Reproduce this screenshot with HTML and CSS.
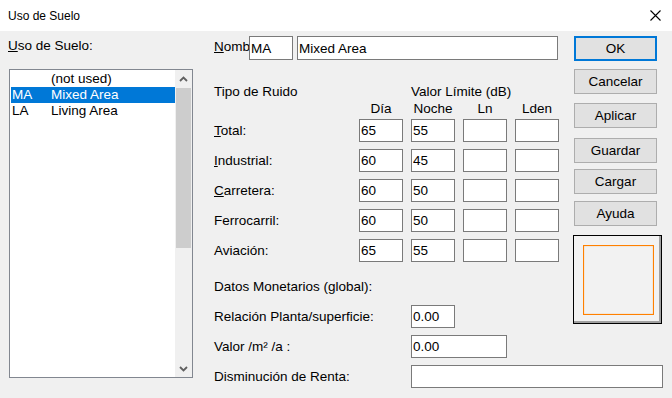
FILE: index.html
```html
<!DOCTYPE html>
<html lang="es">
<head>
    <meta charset="UTF-8">
    <title>Uso de Suelo</title>
    <link rel="stylesheet" href="styles.css">
</head>
<body>
    <div id="dialog">
        <div class="titlebar">
            <span class="title">Uso de Suelo</span>
            <svg class="close" width="11" height="11" viewBox="0 0 11 11">
                <path d="M0.5 0.5 L10.5 10.5 M10.5 0.5 L0.5 10.5" stroke="#000" stroke-width="1.1" fill="none"/>
            </svg>
        </div>
        <div class="main">
            <div class="left">
                <div class="label"><u>U</u>so de Suelo:</div>
                <div class="listbox">
                    <ul class="items">
                        <li><span class="code"></span>(not used)</li>
                        <li class="selected"><span class="code">MA</span>Mixed Area</li>
                        <li><span class="code">LA</span>Living Area</li>
                    </ul>
                    <div class="scrollbar">
                        <div class="arrow up">
                            <svg width="9" height="6" viewBox="0 0 9 6"><path d="M1 5 L4.5 1.5 L8 5" stroke="#606060" stroke-width="1.8" fill="none"/></svg>
                        </div>
                        <div class="thumb"></div>
                        <div class="track"></div>
                        <div class="arrow">
                            <svg width="9" height="6" viewBox="0 0 9 6"><path d="M1 1 L4.5 4.5 L8 1" stroke="#606060" stroke-width="1.8" fill="none"/></svg>
                        </div>
                    </div>
                </div>
            </div>

            <div class="right">
                <div class="form">
                    <div class="name-row">
                        <span class="name-label"><u>N</u>ombre</span>
                        <input class="field code-field" type="text" value="MA">
                        <input class="field name-field" type="text" value="Mixed Area">
                    </div>

                    <div class="grid head-row">
                        <span>Tipo de Ruido</span>
                        <span></span>
                        <span class="limit">Valor Límite (dB)</span>
                    </div>
                    <div class="grid cols-row">
                        <span></span>
                        <span class="col">Día</span>
                        <span class="col">Noche</span>
                        <span class="col">Ln</span>
                        <span class="col">Lden</span>
                    </div>
                    <div class="grid noise-row">
                        <span><u>T</u>otal:</span>
                        <input class="field" type="text" value="65">
                        <input class="field" type="text" value="55">
                        <input class="field" type="text" value="">
                        <input class="field" type="text" value="">
                    </div>
                    <div class="grid noise-row">
                        <span><u>I</u>ndustrial:</span>
                        <input class="field" type="text" value="60">
                        <input class="field" type="text" value="45">
                        <input class="field" type="text" value="">
                        <input class="field" type="text" value="">
                    </div>
                    <div class="grid noise-row">
                        <span><u>C</u>arretera:</span>
                        <input class="field" type="text" value="60">
                        <input class="field" type="text" value="50">
                        <input class="field" type="text" value="">
                        <input class="field" type="text" value="">
                    </div>
                    <div class="grid noise-row">
                        <span>Ferrocarril:</span>
                        <input class="field" type="text" value="60">
                        <input class="field" type="text" value="50">
                        <input class="field" type="text" value="">
                        <input class="field" type="text" value="">
                    </div>
                    <div class="grid noise-row">
                        <span>Aviación:</span>
                        <input class="field" type="text" value="65">
                        <input class="field" type="text" value="55">
                        <input class="field" type="text" value="">
                        <input class="field" type="text" value="">
                    </div>

                    <div class="money-title">Datos Monetarios (global):</div>
                    <div class="money-row first">
                        <span class="money-label">Relación Planta/superficie:</span>
                        <input class="field small" type="text" value="0.00">
                    </div>
                    <div class="money-row">
                        <span class="money-label">Valor /m² /a :</span>
                        <input class="field medium" type="text" value="0.00">
                    </div>
                </div>

                <div class="side">
                    <button class="btn default">OK</button>
                    <button class="btn">Cancelar</button>
                    <button class="btn">Aplicar</button>
                    <button class="btn">Guardar</button>
                    <button class="btn">Cargar</button>
                    <button class="btn">Ayuda</button>
                    <div class="preview">
                        <svg class="swatch" width="71" height="70" viewBox="0 0 71 70">
                            <rect x="0.5" y="0.5" width="70" height="69" fill="none" stroke="#ff8000" stroke-width="1.2"/>
                        </svg>
                    </div>
                </div>

                <div class="money-row bottom">
                    <span class="money-label">Disminución de Renta:</span>
                    <input class="field wide" type="text" value="">
                </div>
            </div>
        </div>
    </div>
</body>
</html>
```

FILE: styles.css
```css
*{
    margin: 0;
    padding: 0;
    box-sizing: border-box;
}
li{
    list-style: none;
}
body{
    font-family: "Liberation Sans", Arial, sans-serif;
    font-size: 13.5px;
    color: #000;
}

#dialog{
    width: 672px;
    height: 398px;
    overflow: hidden;
    background: #f0f0f0;
}

.titlebar{
    height: 31px;
    background: #fff;
    display: flex;
    align-items: center;
    justify-content: space-between;
    padding: 0 11px 0 8px;
}
.title{
    font-size: 12px;
}

.main{
    display: flex;
}

/* lista de la izquierda */
.left{
    width: 184px;
    margin-left: 9px;
    padding-top: 8px;
}
.label{
    line-height: 14px;
    margin-left: -1px;
}
.listbox{
    margin-top: 16px;
    height: 309px;
    border: 1px solid #828790;
    background: #fff;
    display: flex;
    padding-left: 1px;
}
.items{
    width: 164px;
    padding-top: 1px;
}
.items li{
    height: 16px;
    line-height: 16px;
    padding-left: 1px;
    white-space: nowrap;
}
.items .code{
    display: inline-block;
    width: 39px;
}
.items .selected{
    background: #0078d7;
    color: #fff;
}
.scrollbar{
    width: 17px;
    display: flex;
    flex-direction: column;
    background: #f0f0f0;
}
.arrow{
    height: 17px;
    display: flex;
    align-items: center;
    justify-content: center;
}
.arrow.up{
    height: 18px;
}
.thumb{
    height: 160px;
    margin: 0 1px;
    background: #cdcdcd;
}
.track{
    flex: 1;
}

/* parte derecha */
.right{
    margin-left: 21px;
    width: 449px;
    display: grid;
    grid-template-columns: 1fr 89px;
}
.form{
    padding-top: 5px;
}
.field{
    height: 23px;
    border: 1px solid #7a7a7a;
    background: #fff;
    font-family: inherit;
    font-size: 13.5px;
    padding: 0 1px;
    outline: none;
    color: #000;
}

.name-row{
    display: flex;
    height: 24px;
}
.name-label{
    width: 35px;
    overflow: hidden;
    white-space: nowrap;
    line-height: 22px;
}
.name-row .field{
    height: 24px;
}
.code-field{
    width: 44px;
    margin-right: 4px;
}
.name-field{
    width: 261px;
}

.grid{
    display: grid;
    grid-template-columns: 137px repeat(4, 44px);
    column-gap: 8px;
    align-items: center;
}
.head-row{
    margin-top: 23px;
    height: 16px;
}
.head-row .limit{
    grid-column: 3 / span 2;
    text-align: center;
    white-space: nowrap;
}
.cols-row{
    height: 16px;
    margin-top: 1px;
}
.cols-row .col{
    text-align: center;
}
.noise-row{
    margin-top: 7px;
}
.cols-row + .noise-row{
    margin-top: 3px;
}

.money-title{
    margin-top: 17px;
    line-height: 16px;
}
.money-row{
    display: flex;
    align-items: center;
    margin-top: 7px;
}
.money-row.first{
    margin-top: 10px;
}
.money-label{
    width: 197px;
}
.small{
    width: 44px;
}
.medium{
    width: 96px;
}
.wide{
    width: 252px;
}
.bottom{
    grid-column: 1 / span 2;
}

/* botones */
.side{
    padding-top: 5px;
    display: flex;
    flex-direction: column;
}
.btn{
    width: 83px;
    height: 25px;
    border: 1px solid #adadad;
    background: #e1e1e1;
    font-family: inherit;
    font-size: 13.5px;
    color: #000;
}
.btn.default{
    border: 2px solid #0078d7;
}
.btn:nth-child(2){
    margin-top: 8px;
}
.btn:nth-child(3){
    margin-top: 9px;
}
.btn:nth-child(4){
    margin-top: 10px;
}
.btn:nth-child(5){
    margin-top: 6px;
}
.btn:nth-child(6){
    margin-top: 7px;
}
.preview{
    margin-top: 9px;
    margin-left: -1px;
    width: 89px;
    height: 89px;
    border: 1px solid #000;
    background: #f2f2f2;
    box-shadow: inset -2px -2px 0 #a0a0a0;
    padding: 9px 7px 8px 9px;
}
.swatch{
    display: block;
}
```
